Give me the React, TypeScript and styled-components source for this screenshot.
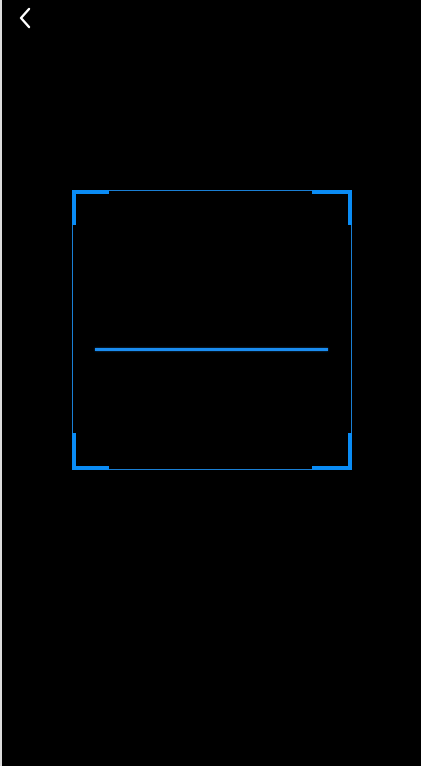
import React from 'react'
import styled, { createGlobalStyle } from 'styled-components';

const GlobalStyle = createGlobalStyle`
    html, body {
        margin: 0;
        padding: 0;
        background: #000;
    }
    * {
        box-sizing: border-box;
    }
`;

const Page = styled.div`
    min-height: 100vh;
    background: #000;
    border-left: 2px solid #dcdcdc;
    display: flex;
    flex-direction: column;
    font-family: "Noto Sans", sans-serif;
`;

const Header = styled.div`
    height: 36px;
    display: flex;
    align-items: center;
    padding-left: 11px;

    button {
        width: 24px;
        height: 36px;
        padding: 0;
        border: none;
        background: transparent;
        cursor: pointer;
        display: flex;
        align-items: center;
        justify-content: center;
    }
`;

const Frame = styled.div`
    position: relative;
    width: 280px;
    height: 280px;
    margin: 154px 0 0 70px;
    border: 1px solid #1a7fd4;
`;

const Corner = styled.span<{ $v: 'top' | 'bottom'; $h: 'left' | 'right' }>`
    position: absolute;
    width: ${p => (p.$h === 'left' ? 37 : 40)}px;
    height: ${p => (p.$v === 'top' ? 35 : 37)}px;
    ${p => p.$v}: -1px;
    ${p => p.$h}: -1px;
    border-${p => p.$v}: 4px solid #0a8cf5;
    border-${p => p.$h}: 4px solid #0a8cf5;
`;

const ScanLine = styled.div`
    position: absolute;
    top: 157px;
    left: 22px;
    right: 23px;
    height: 3px;
    background: #1a8cf0;
    box-shadow: 0 0 2px rgba(26, 140, 240, 0.6);
`;

const App = () => {
  return (
    <>
      <GlobalStyle />
      <Page>
        <Header>
          <button aria-label="back">
            <svg width="12" height="22" viewBox="0 0 12 22" fill="none">
              <path d="M10 2 L2 11 L10 20" stroke="#fff" strokeWidth="2.4" strokeLinecap="round" strokeLinejoin="round" />
            </svg>
          </button>
        </Header>
        <Frame>
          <Corner $v="top" $h="left" />
          <Corner $v="top" $h="right" />
          <Corner $v="bottom" $h="left" />
          <Corner $v="bottom" $h="right" />
          <ScanLine />
        </Frame>
      </Page>
    </>
  )
}

export default App
